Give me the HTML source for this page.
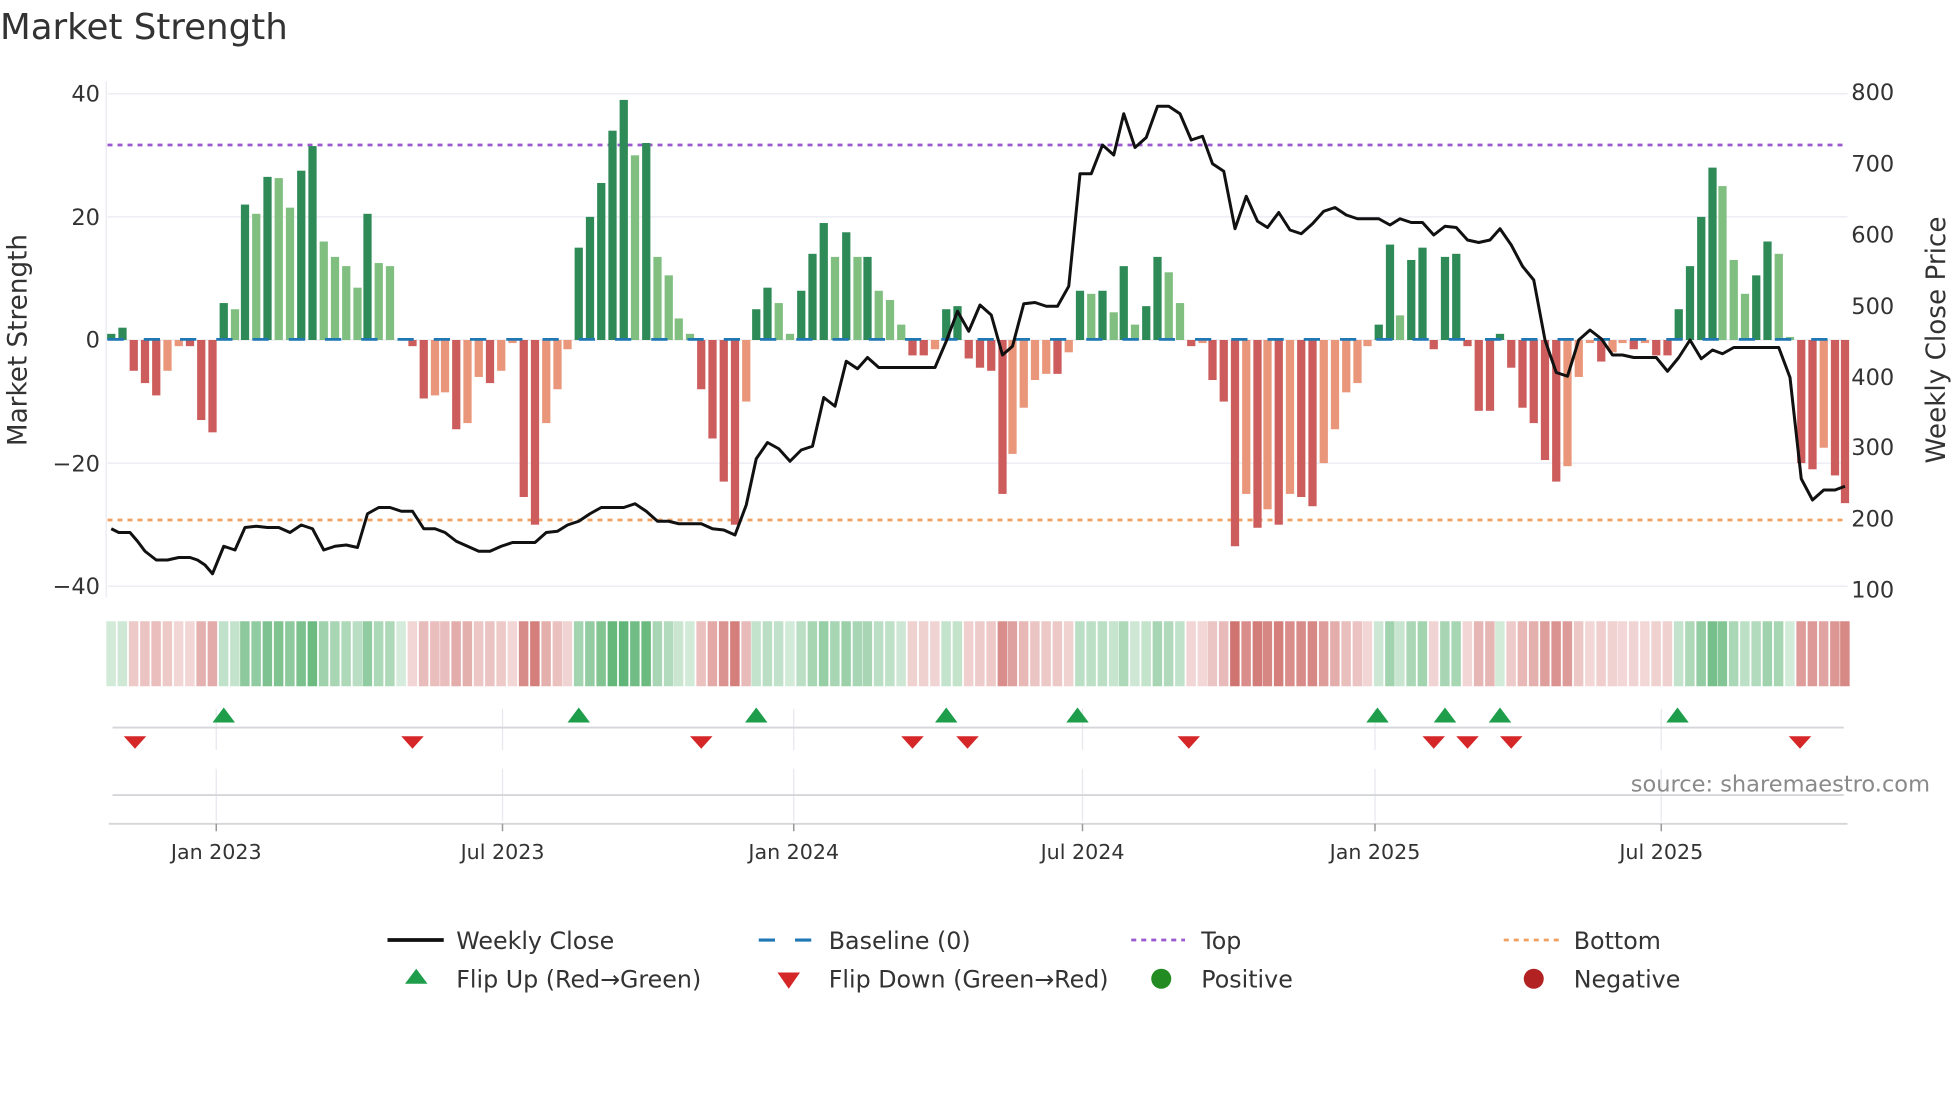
<!DOCTYPE html>
<html><head><meta charset="utf-8"><style>
html,body{margin:0;padding:0;background:#fff;}
svg{display:block;font-family:"DejaVu Sans","Liberation Sans",sans-serif;}
</style></head><body>
<svg id="c" width="1960" height="1102" viewBox="0 0 1568 881.6" preserveAspectRatio="none" xmlns="http://www.w3.org/2000/svg">
<rect width="1568" height="882" fill="#fff"/>
<text x="0" y="31" font-size="28.5" fill="#333">Market Strength</text>
<g id="grid" stroke="#eceef4" stroke-width="1.2">
<line x1="86" x2="1478" y1="75" y2="75"/><line x1="86" x2="1478" y1="173.5" y2="173.5"/>
<line x1="86" x2="1478" y1="272" y2="272"/><line x1="86" x2="1478" y1="370.5" y2="370.5"/>
<line x1="86" x2="1478" y1="469" y2="469"/>
</g>
<line x1="85" x2="85" y1="65" y2="478" stroke="#eceef4" stroke-width="1.2"/>
<g font-size="18" fill="#333" text-anchor="end">
<text x="80" y="81">40</text><text x="80" y="180">20</text><text x="80" y="278">0</text>
<text x="80" y="377">−20</text><text x="80" y="475">−40</text>
</g>
<g font-size="18" fill="#333">
<text x="1481" y="80">800</text><text x="1481" y="137">700</text><text x="1481" y="194">600</text>
<text x="1481" y="251">500</text><text x="1481" y="308">400</text><text x="1481" y="364">300</text>
<text x="1481" y="421">200</text><text x="1481" y="478">100</text>
</g>
<text transform="translate(21,272) rotate(-90)" font-size="21" fill="#333" text-anchor="middle">Market Strength</text>
<text transform="translate(1556,272) rotate(-90)" font-size="21" fill="#333" text-anchor="middle">Weekly Close Price</text>
<line x1="86" x2="1478" y1="116" y2="116" stroke="#9b59d0" stroke-width="2.2" stroke-dasharray="4,4"/>
<line x1="86" x2="1478" y1="416" y2="416" stroke="#f0a060" stroke-width="2.2" stroke-dasharray="4,4"/>
<g id="bars"></g>
<line x1="86" x2="1478" y1="271.5" y2="271.5" stroke="#1f77b4" stroke-width="2.2" stroke-dasharray="13,16"/>
<polyline id="price" fill="none" stroke="#111" stroke-width="2.4" stroke-linejoin="round"/>
<g id="heat"></g>
<g stroke="#e6e8ee" stroke-width="1">
<line x1="173" x2="173" y1="567" y2="600"/><line x1="402" x2="402" y1="567" y2="600"/><line x1="635" x2="635" y1="567" y2="600"/>
<line x1="866" x2="866" y1="567" y2="600"/><line x1="1100" x2="1100" y1="567" y2="600"/><line x1="1329" x2="1329" y1="567" y2="600"/>
<line x1="173" x2="173" y1="615" y2="657"/><line x1="402" x2="402" y1="615" y2="657"/><line x1="635" x2="635" y1="615" y2="657"/>
<line x1="866" x2="866" y1="615" y2="657"/><line x1="1100" x2="1100" y1="615" y2="657"/><line x1="1329" x2="1329" y1="615" y2="657"/>
</g>
<line x1="90" x2="1475" y1="582" y2="582" stroke="#d4d6da" stroke-width="1.5"/>
<line x1="90" x2="1475" y1="636" y2="636" stroke="#d4d6da" stroke-width="1.5"/>
<line x1="87" x2="1478" y1="659" y2="659" stroke="#d4d6da" stroke-width="1.5"/>
<g stroke="#999" stroke-width="1.2">
<line x1="173" x2="173" y1="659" y2="665"/><line x1="402" x2="402" y1="659" y2="665"/><line x1="635" x2="635" y1="659" y2="665"/>
<line x1="866" x2="866" y1="659" y2="665"/><line x1="1100" x2="1100" y1="659" y2="665"/><line x1="1329" x2="1329" y1="659" y2="665"/>
</g>
<g id="flips"></g>
<text x="1544" y="633" font-size="18" fill="#8a8a8a" text-anchor="end">source: sharemaestro.com</text>
<g font-size="16.5" fill="#333" text-anchor="middle">
<text x="173" y="687">Jan 2023</text><text x="402" y="687">Jul 2023</text><text x="635" y="687">Jan 2024</text>
<text x="866" y="687">Jul 2024</text><text x="1100" y="687">Jan 2025</text><text x="1329" y="687">Jul 2025</text>
</g>
<g font-size="19" fill="#333">
<line x1="310" x2="355" y1="752" y2="752" stroke="#111" stroke-width="3"/>
<text x="365" y="759">Weekly Close</text>
<line x1="607" x2="650" y1="752" y2="752" stroke="#1f77b4" stroke-width="2.5" stroke-dasharray="13,16"/>
<text x="663" y="759">Baseline (0)</text>
<line x1="905" x2="948" y1="752" y2="752" stroke="#9b59d0" stroke-width="2.2" stroke-dasharray="4,4"/>
<text x="961" y="759">Top</text>
<line x1="1203" x2="1247" y1="752" y2="752" stroke="#f0a060" stroke-width="2.2" stroke-dasharray="4,4"/>
<text x="1259" y="759">Bottom</text>
<polygon points="324,787 342,787 333,775" fill="#1e9e4a"/>
<text x="365" y="790">Flip Up (Red→Green)</text>
<polygon points="622,778 640,778 631,791" fill="#d62728"/>
<text x="663" y="790">Flip Down (Green→Red)</text>
<circle cx="929" cy="783" r="8" fill="#228b22"/>
<text x="961" y="790">Positive</text>
<circle cx="1227" cy="783" r="8" fill="#b22222"/>
<text x="1259" y="790">Negative</text>
</g>
</svg>
<script>
var NS="http://www.w3.org/2000/svg";
var xs=[89,98,107,116,125,134,143,152,161,170,179,188,196,205,214,223,232,241,250,259,268,277,286,294,303,312,321,330,339,348,356,365,374,383,392,401,410,419,428,437,446,454,463,472,481,490,499,508,517,526,535,543,552,561,570,579,588,597,605,614,623,632,641,650,659,668,677,686,694,703,712,721,730,739,748,757,766,775,784,793,802,810,819,828,837,846,855,864,873,882,891,899,908,917,926,935,944,953,962,970,979,988,997,1006,1014,1023,1032,1041,1050,1059,1068,1077,1086,1094,1103,1112,1120,1129,1138,1147,1156,1165,1174,1183,1192,1200,1209,1218,1227,1236,1245,1254,1263,1272,1281,1290,1298,1307,1316,1325,1334,1343,1352,1361,1370,1378,1387,1396,1405,1414,1423,1432,1441,1450,1459,1468,1476];
var vs=[1,2,-5,-7,-9,-5,-1,-1,-13,-15,6,5,22,20.5,26.5,26.3,21.5,27.5,31.5,16,13.5,12,8.5,20.5,12.5,12,0,-1,-9.5,-9,-8.5,-14.5,-13.5,-6,-7,-5,-0.5,-25.5,-30,-13.5,-8,-1.5,15,20,25.5,34,39,30,32,13.5,10.5,3.5,1,-8,-16,-23,-30,-10,5,8.5,6,1,8,14,19,13.5,17.5,13.5,13.5,8,6.5,2.5,-2.5,-2.5,-1.5,5,5.5,-3,-4.5,-5,-25,-18.5,-11,-6.5,-5.5,-5.5,-2,8,7.5,8,4.5,12,2.5,5.5,13.5,11,6,-1,-0.5,-6.5,-10,-33.5,-25,-30.5,-27.5,-30,-25,-25.5,-27,-20,-14.5,-8.5,-7,-1,2.5,15.5,4,13,15,-1.5,13.5,14,-1,-11.5,-11.5,1,-4.5,-11,-13.5,-19.5,-23,-20.5,-6,-0.5,-3.5,-2,-0.5,-1.5,-0.5,-2.5,-2.5,5,12,20,28,25,13,7.5,10.5,16,14,0.5,-20,-21,-17.5,-22,-26.5];
var bars=document.getElementById('bars'),heat=document.getElementById('heat');
for(var i=0;i<xs.length;i++){
 var v=vs[i],p=i?vs[i-1]:0,col;
 if(v>=0) col=(v>=p)?'#2e8b57':'#80bf80'; else col=(v<=p)?'#cd5c5c':'#e9967a';
 var y0=272,h=v*98.5/20,r=document.createElementNS(NS,'rect');
 r.setAttribute('x',xs[i]-3.3);r.setAttribute('width',6.6);
 r.setAttribute('y',v>=0?y0-h:y0);r.setAttribute('height',Math.abs(h));r.setAttribute('fill',col);bars.appendChild(r);
 var a=0.22+0.6*Math.min(Math.abs(v)/35,1);
 var c=document.createElementNS(NS,'rect');
 c.setAttribute('x',xs[i]-3.9);c.setAttribute('width',7.6);c.setAttribute('y',497);c.setAttribute('height',52);
 c.setAttribute('fill',v>=0?'#3fa55a':'#c4504c');c.setAttribute('fill-opacity',a);heat.appendChild(c);
}
var pts="89,423 95,426 104,426 110,433 116,441 125,448 134,448 143,446 152,446 158,448 164,452 170,459 179,437 188,440 196,422 205,421 214,422 223,422 232,426 241,420 250,423 259,440 268,437 277,436 286,438 294,411 303,406 312,406 321,409 330,409 339,423 348,423 356,426 365,433 374,437 383,441 392,441 401,437 410,434 419,434 428,434 437,426 446,425 454,420 463,417 472,411 481,406 490,406 499,406 508,403 517,409 526,417 535,417 543,419 552,419 561,419 570,423 579,424 588,428 597,404 605,367 614,354 623,359 632,369 641,360 650,357 659,318 668,325 677,289 686,295 694,286 703,294 712,294 721,294 730,294 739,294 748,294 757,273 766,249 775,265 784,244 793,252 802,284 810,277 819,243 828,242 837,245 846,245 855,229 864,139 873,139 882,116 891,124 899,91 908,118 917,110 926,85 935,85 944,91 953,112 962,109 970,131 979,137 988,183 997,157 1006,177 1014,182 1023,170 1032,184 1041,187 1050,179 1059,169 1068,166 1077,172 1086,175 1094,175 1103,175 1112,180 1120,175 1129,178 1138,178 1147,188 1156,181 1165,182 1174,192 1183,194 1192,192 1200,183 1209,196 1218,213 1227,224 1236,272 1245,298 1254,301 1263,272 1272,264 1281,271 1290,284 1298,284 1307,286 1316,286 1325,286 1334,297 1343,286 1352,272 1361,287 1370,280 1378,283 1387,278 1396,278 1405,278 1414,278 1423,278 1432,302 1441,383 1450,400 1459,392 1468,392 1476,389";
document.getElementById('price').setAttribute('points',pts);
var fl=document.getElementById('flips'),ups=[179,463,605,757,862,1102,1156,1200,1342],dns=[108,330,561,730,774,951,1147,1174,1209,1440];
ups.forEach(function(x){var t=document.createElementNS(NS,'polygon');t.setAttribute('points',(x-9)+',578 '+(x+9)+',578 '+x+',566');t.setAttribute('fill','#1e9e4a');fl.appendChild(t);});
dns.forEach(function(x){var t=document.createElementNS(NS,'polygon');t.setAttribute('points',(x-9)+',589 '+(x+9)+',589 '+x+',599');t.setAttribute('fill','#d62728');fl.appendChild(t);});
</script>
</body></html>
